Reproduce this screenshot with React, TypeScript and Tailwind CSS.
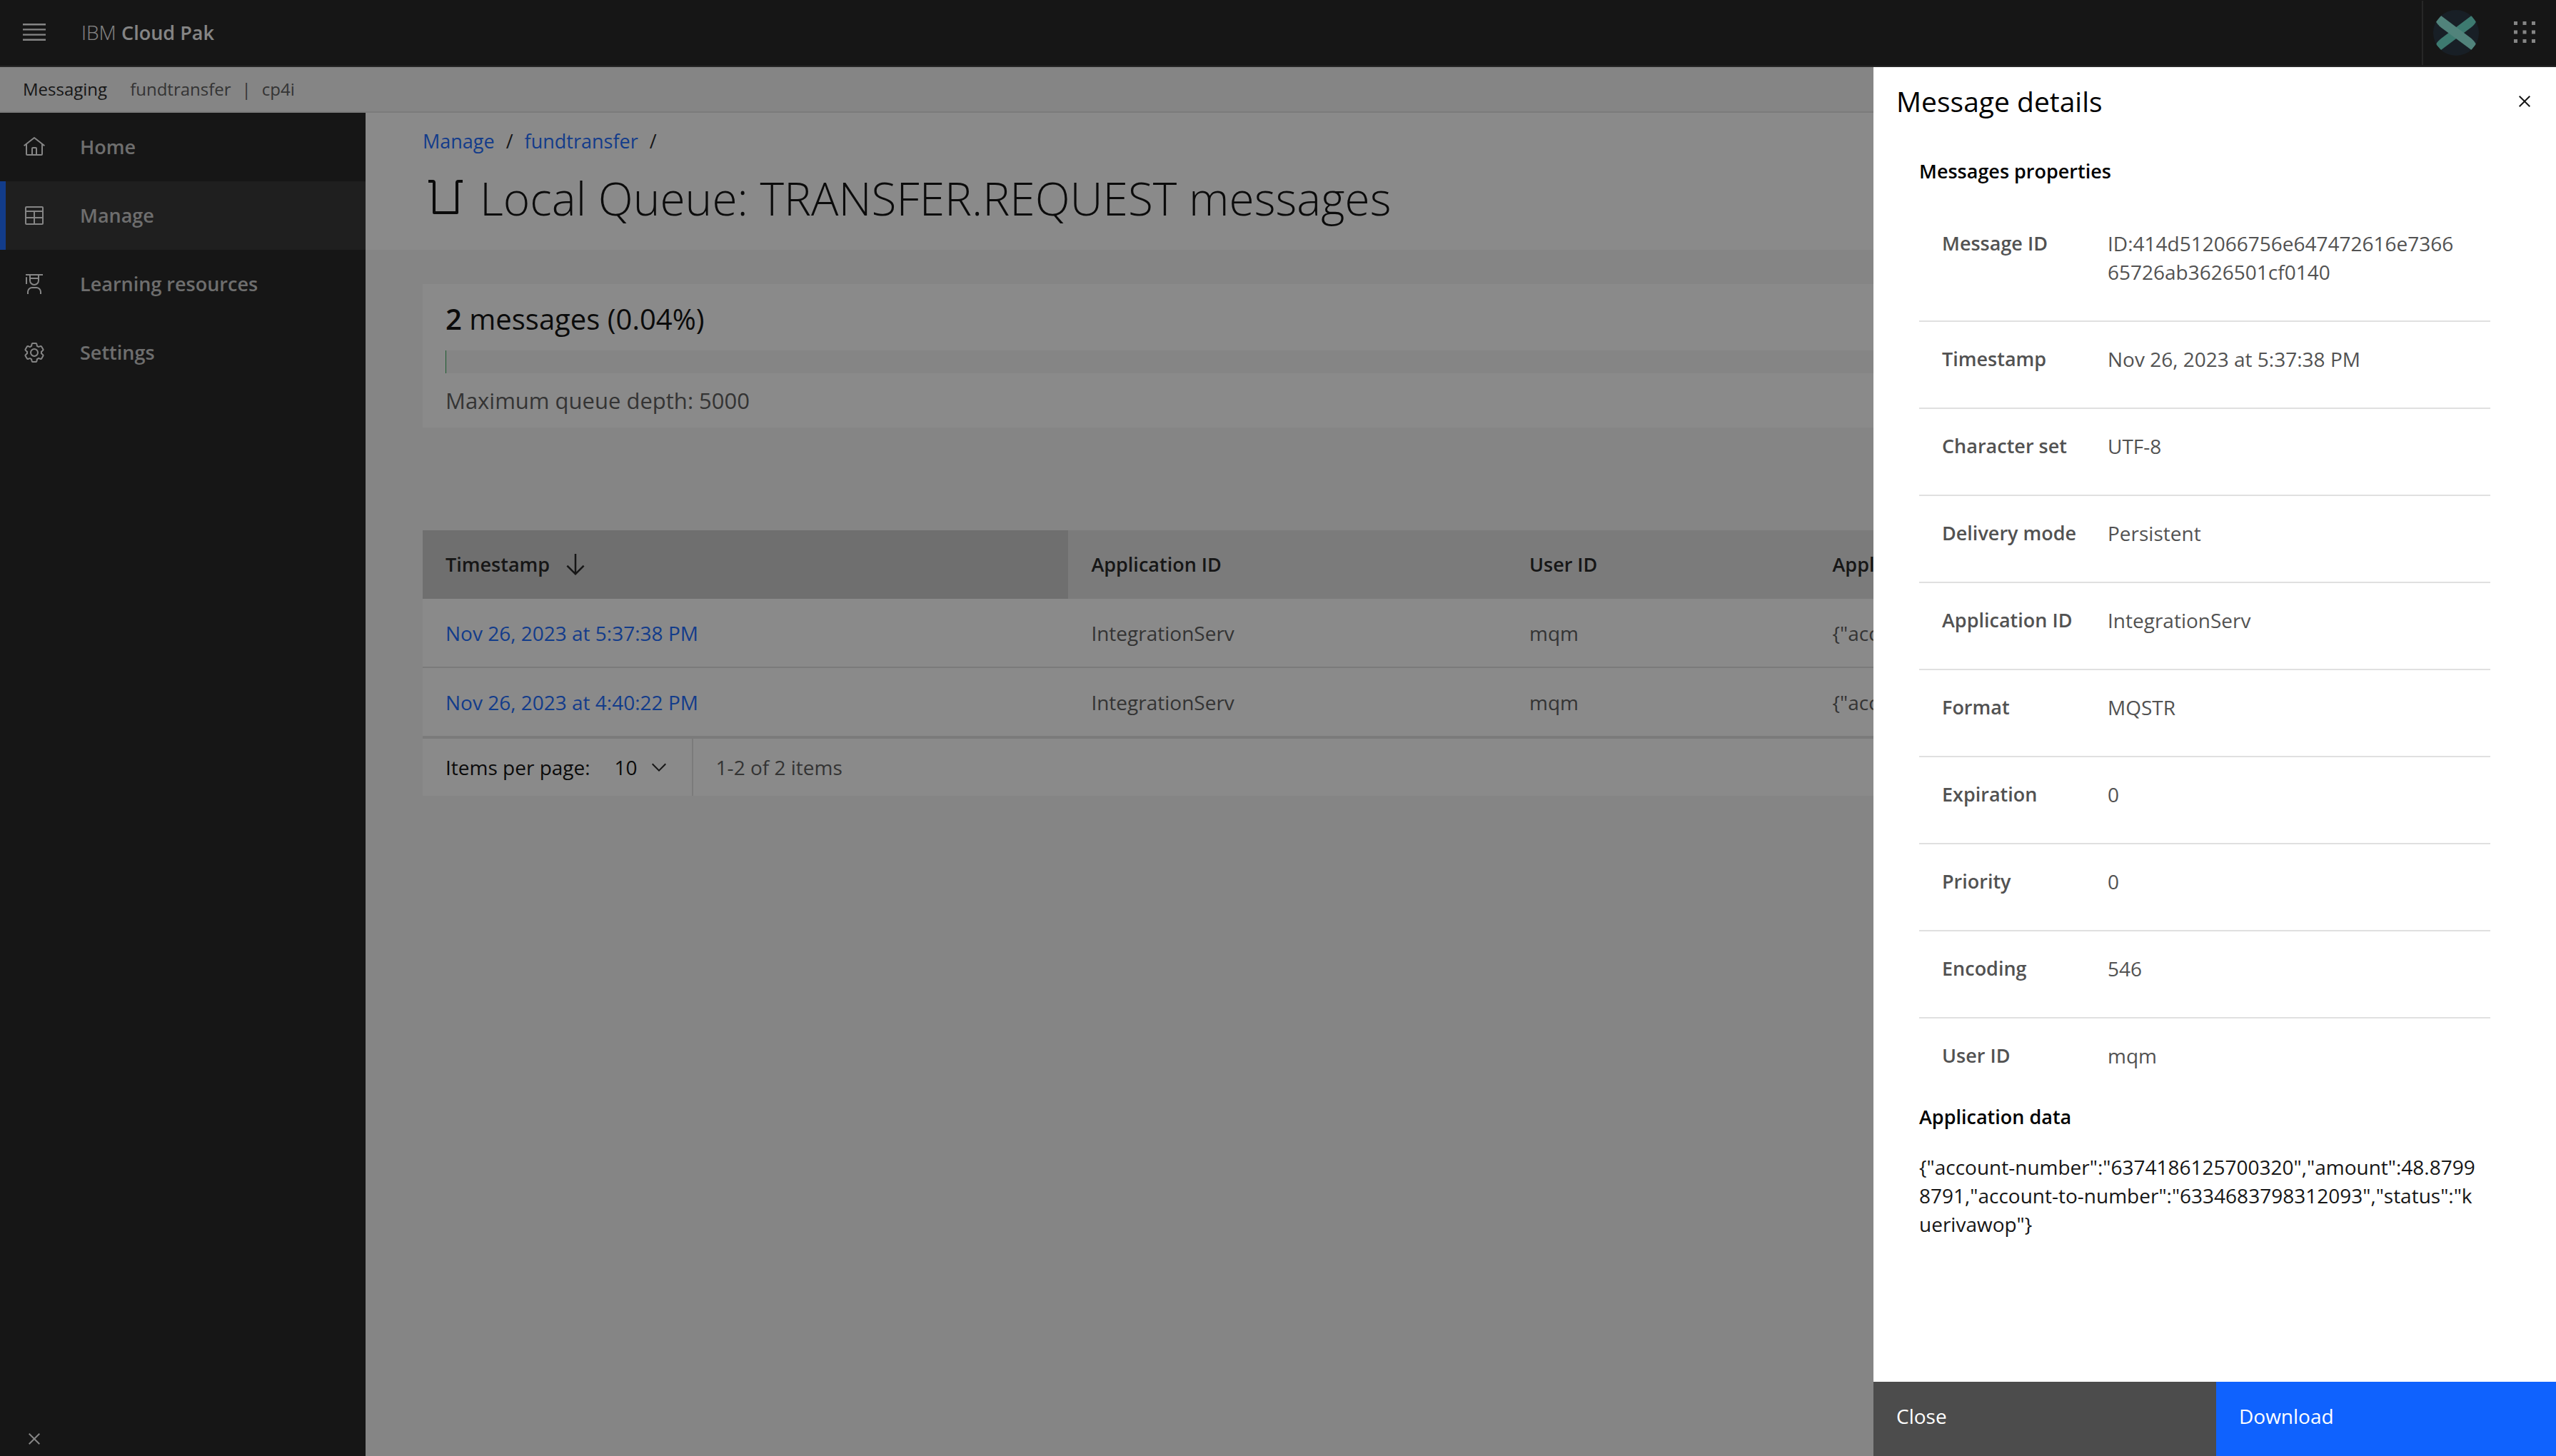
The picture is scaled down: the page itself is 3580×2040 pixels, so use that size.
import type { ReactNode } from "react";

const NAV: { label: string; icon: ReactNode; current?: boolean }[] = [
  {
    label: "Home",
    icon: (
      <path d="M16.61 2.21a1 1 0 0 0-1.24 0L1 13.42 2.24 15 4 13.62V26a2 2 0 0 0 2 2h20a2 2 0 0 0 2-2V13.63L29.76 15 31 13.43zM18 26h-4v-8h4zm2 0v-8a2 2 0 0 0-2-2h-4a2 2 0 0 0-2 2v8H6V12.06l10-7.79 10 7.8V26z" />
    ),
  },
  {
    label: "Manage",
    current: true,
    icon: (
      <path d="M27 3H5a2 2 0 0 0-2 2v22a2 2 0 0 0 2 2h22a2 2 0 0 0 2-2V5a2 2 0 0 0-2-2zm0 2v4H5V5zM17 11h10v7H17zm-2 7H5v-7h10zM5 20h10v7H5zm12 7v-7h10v7z" />
    ),
  },
  {
    label: "Learning resources",
    icon: (
      <path d="M26 30h-2v-3a5.006 5.006 0 0 0-5-5h-6a5.006 5.006 0 0 0-5 5v3H6v-3a7.008 7.008 0 0 1 7-7h6a7.008 7.008 0 0 1 7 7zM5 6a1 1 0 0 0-1 1v9h2V7a1 1 0 0 0-1-1zM4 2v2h5v7a7 7 0 0 0 14 0V4h5V2zm7 2h10v3H11zm5 12a5 5 0 0 1-5-5V9h10v2a5 5 0 0 1-5 5z" />
    ),
  },
  {
    label: "Settings",
    icon: (
      <path d="M27 16.76v-1.53l1.92-1.68A2 2 0 0 0 29.3 11l-2.36-4a2 2 0 0 0-1.73-1 2 2 0 0 0-.64.1l-2.43.82a11.35 11.35 0 0 0-1.31-.75l-.51-2.52a2 2 0 0 0-2-1.61h-4.68a2 2 0 0 0-2 1.61l-.51 2.52a11.48 11.48 0 0 0-1.32.75l-2.38-.86A2 2 0 0 0 6.79 6a2 2 0 0 0-1.73 1L2.7 11a2 2 0 0 0 .41 2.51L5 15.24v1.53l-1.89 1.68A2 2 0 0 0 2.7 21l2.36 4a2 2 0 0 0 1.73 1 2 2 0 0 0 .64-.1l2.43-.82a11.35 11.35 0 0 0 1.31.75l.51 2.52a2 2 0 0 0 2 1.61h4.72a2 2 0 0 0 2-1.61l.51-2.52a11.48 11.48 0 0 0 1.32-.75l2.42.82a2 2 0 0 0 .64.1 2 2 0 0 0 1.73-1l2.28-4a2 2 0 0 0-.41-2.51zM25.21 24l-3.43-1.16a8.86 8.86 0 0 1-2.71 1.57L18.36 28h-4.72l-.71-3.55a9.36 9.36 0 0 1-2.7-1.57L6.79 24l-2.36-4 2.72-2.4a8.9 8.9 0 0 1 0-3.13L4.43 12l2.36-4 3.43 1.16a8.86 8.86 0 0 1 2.71-1.57L13.64 4h4.72l.71 3.55a9.36 9.36 0 0 1 2.7 1.57L25.21 8l2.36 4-2.72 2.4a8.9 8.9 0 0 1 0 3.13L27.57 20zM16 22a6 6 0 1 1 6-6 5.94 5.94 0 0 1-6 6zm0-10a3.91 3.91 0 0 0-4 4 3.91 3.91 0 0 0 4 4 3.91 3.91 0 0 0 4-4 3.91 3.91 0 0 0-4-4z" />
    ),
  },
];

const MESSAGES = [
  { time: "Nov 26, 2023 at 5:37:38 PM", app: "IntegrationServ", user: "mqm" },
  { time: "Nov 26, 2023 at 4:40:22 PM", app: "IntegrationServ", user: "mqm" },
];

const PROPERTIES: [string, string[]][] = [
  ["Message ID", ["ID:414d512066756e647472616e7366", "65726ab3626501cf0140"]],
  ["Timestamp", ["Nov 26, 2023 at 5:37:38 PM"]],
  ["Character set", ["UTF-8"]],
  ["Delivery mode", ["Persistent"]],
  ["Application ID", ["IntegrationServ"]],
  ["Format", ["MQSTR"]],
  ["Expiration", ["0"]],
  ["Priority", ["0"]],
  ["Encoding", ["546"]],
  ["User ID", ["mqm"]],
];

const DATA_LINES = [
  '{"account-number":"6374186125700320","amount":48.8799',
  '8791,"account-to-number":"6334683798312093","status":"k',
  'uerivawop"}',
];

function CloseIcon() {
  return (
    <svg viewBox="0 0 32 32" className="size-8" fill="currentColor" aria-hidden="true">
      <path d="M24 9.4 22.6 8 16 14.6 9.4 8 8 9.4l6.6 6.6L8 22.6 9.4 24l6.6-6.6 6.6 6.6 1.4-1.4-6.6-6.6z" />
    </svg>
  );
}

function Header() {
  return (
    <header className="flex h-[94px] shrink-0 items-center border-b-2 border-[#393939] bg-[#161616] pb-0.5 text-[#f4f4f4]">
      <button aria-label="Open menu" className="grid w-24 place-items-center">
        <svg viewBox="0 0 20 20" className="size-10" fill="currentColor" aria-hidden="true">
          <path d="M2 14.8h16V16H2zM2 11.2h16v1.2H2zM2 7.6h16v1.2H2zM2 4h16v1.2H2z" />
        </svg>
      </button>
      <a href="#home" className="pl-[18px] text-[28px] leading-9 font-light">
        IBM <span className="text-[27px] font-semibold">Cloud Pak</span>
      </a>
      <div className="-mb-0.5 ml-auto flex h-full w-24 items-center justify-center border-l-2 border-[#393939] pr-0.5">
        <button aria-label="User profile">
          <svg viewBox="0 0 64 64" className="size-16" aria-hidden="true">
            <clipPath id="avatar">
              <circle cx="32" cy="32" r="32" />
            </clipPath>
            <circle cx="32" cy="32" r="32" fill="#1a2836" />
            <g clipPath="url(#avatar)">
              <path d="M4 48.500C5 45 8 42.500 11 40L53.500 8L60 16.500C58 20 56 22 53 24.500L11 56Z" fill="#64deca" />
              <path d="M11 8L53 39.500C57 43 58.500 45 60 48L53.500 56L11 24.500C7 21 5.500 19 4 16.500Z" fill="#8cf0e0" />
            </g>
          </svg>
        </button>
      </div>
      <button aria-label="Switch application" className="grid w-[92px] place-items-center pl-1">
        <svg viewBox="0 0 32 32" className="size-10" fill="currentColor" aria-hidden="true">
          <path d="M4 4h4v4H4zM14 4h4v4h-4zM24 4h4v4h-4zM4 14h4v4H4zM14 14h4v4h-4zM24 14h4v4h-4zM4 24h4v4H4zM14 24h4v4h-4zM24 24h4v4h-4z" />
        </svg>
      </button>
    </header>
  );
}

function Sidebar() {
  return (
    <nav aria-label="Main" className="flex w-[512px] shrink-0 flex-col bg-[#161616] text-[#c6c6c6]">
      <ul>
        {NAV.map(({ label, icon, current }) => (
          <li key={label}>
            <a
              href="#nav"
              aria-current={current ? "page" : undefined}
              className={
                current
                  ? "flex h-24 items-center gap-12 border-l-8 border-[#0f62fe] bg-[#282828] pl-6 text-[27px] font-semibold"
                  : "flex h-24 items-center gap-12 pl-8 text-[27px] font-semibold"
              }
            >
              <svg viewBox="0 0 32 32" className="size-8 text-[#f4f4f4]" fill="currentColor" aria-hidden="true">
                {icon}
              </svg>
              {label}
            </a>
          </li>
        ))}
      </ul>
      <button aria-label="Collapse navigation" className="mt-auto mb-2 ml-8 self-start text-[#f4f4f4]">
        <CloseIcon />
      </button>
    </nav>
  );
}

function MessagesTable() {
  return (
    <div className="mt-36">
      <table className="w-full table-fixed text-left">
        <colgroup>
          <col className="w-[31.1%]" />
          <col className="w-[21.1%]" />
          <col className="w-[14.6%]" />
          <col />
        </colgroup>
        <thead>
          <tr className="h-24 bg-[#e0e0e0] text-[27px] text-[#161616]">
            <th scope="col" aria-sort="descending" className="bg-[#c9c9c9] px-8 font-semibold">
              <button className="flex items-center gap-4">
                Timestamp
                <svg viewBox="0 0 32 32" className="size-10" fill="currentColor" aria-hidden="true">
                  <path d="M24.59 16.59 17 24.17V4h-2v20.17l-7.590-7.580L6 18l10 10 10-10z" />
                </svg>
              </button>
            </th>
            <th scope="col" className="px-8 font-semibold">Application ID</th>
            <th scope="col" className="px-8 font-semibold">User ID</th>
            <th scope="col" className="px-8 font-semibold">Application data</th>
          </tr>
        </thead>
        <tbody className="bg-white text-[28px] text-[#525252]">
          {MESSAGES.map((m, i) => (
            <tr key={m.time} className={i > 0 ? "h-24 border-t-2 border-[#e0e0e0]" : "h-24"}>
              <td className="px-8">
                <a href="#message" className="text-[#0f62fe]">{m.time}</a>
              </td>
              <td className="px-8">{m.app}</td>
              <td className="px-8">{m.user}</td>
              <td className="px-8">{'{"account…'}</td>
            </tr>
          ))}
        </tbody>
      </table>
      <div className="flex h-[84px] items-stretch border-t-4 border-[#e0e0e0] bg-white text-[28px]">
        <div className="flex items-center border-r-2 border-[#e0e0e0] pl-8">
          <label htmlFor="page-size" className="text-black">Items per page:</label>
          <div className="relative ml-[34px] flex h-full items-center">
            <select id="page-size" className="h-full w-[108px] appearance-none bg-transparent text-black">
              <option>10</option>
            </select>
            <svg viewBox="0 0 32 32" className="pointer-events-none absolute right-[30px] size-8" fill="#161616" aria-hidden="true">
              <path d="M16 22 6 12l1.400-1.400 8.600 8.600 8.600-8.600L26 12z" />
            </svg>
          </div>
        </div>
        <span className="flex items-center pl-8 text-[#525252]">1-2 of 2 items</span>
      </div>
    </div>
  );
}

function Main() {
  return (
    <main className="min-w-0 flex-1 bg-[#f4f4f4]">
      <div className="h-48 bg-white px-20 pt-[22px]">
        <nav aria-label="Breadcrumb">
          <ol className="flex gap-4 text-[27px] leading-9">
            <li className="flex gap-4">
              <a href="#manage" className="text-[#0f62fe]">Manage</a>
              <span className="text-[#161616]">/</span>
            </li>
            <li className="flex gap-4">
              <a href="#fundtransfer" className="text-[#0f62fe]">fundtransfer</a>
              <span className="text-[#161616]">/</span>
            </li>
          </ol>
        </nav>
        <h1 className="mt-[22px] flex items-center gap-4 text-[64px] leading-[80px] font-light text-black">
          <svg viewBox="0 0 64 64" className="size-16" fill="none" stroke="currentColor" strokeWidth="4" strokeLinejoin="round" aria-hidden="true">
            <path d="M8 8h6q2 0 2 2v42h32V10q0-2 2-2h6" />
          </svg>
          Local Queue: TRANSFER.REQUEST messages
        </h1>
      </div>
      <div className="px-20 pt-12">
        <section className="bg-white px-8 pt-6 pb-[18px]">
          <p className="text-[40px] leading-[50px] text-black">
            <span className="font-semibold">2</span> messages (0.04%)
          </p>
          <div role="meter" aria-label="Queue depth" aria-valuemin={0} aria-valuemax={5000} aria-valuenow={2} className="mt-[19px] h-8 bg-[#f4f4f4]">
            <div className="h-full w-px bg-[#24a148]" />
          </div>
          <p className="mt-[18px] text-[31px] leading-10 text-[#525252]">Maximum queue depth: 5000</p>
        </section>
        <MessagesTable />
      </div>
    </main>
  );
}

function DetailsPanel() {
  return (
    <aside role="dialog" aria-label="Message details" className="fixed top-[94px] right-0 bottom-0 flex w-[956px] flex-col bg-white">
      <div className="flex items-center justify-between pt-[22px] pr-7 pl-8">
        <h2 className="text-[39px] leading-[52px] text-black">Message details</h2>
        <button aria-label="Close panel" className="text-[#161616]">
          <CloseIcon />
        </button>
      </div>
      <div className="flex-1 overflow-hidden pt-[54px] pr-[92px] pl-16">
        <h3 className="text-[27px] leading-9 font-semibold text-black">Messages properties</h3>
        <table className="mt-[31px] w-full text-left text-[28px] leading-10 text-[#525252]">
          <tbody>
            {PROPERTIES.map(([name, value]) => (
              <tr key={name} className="border-b-2 border-[#e0e0e0] align-top last:border-b-0">
                <th scope="row" className="w-[264px] pt-8 pb-12 pl-8 text-[27px] font-semibold whitespace-nowrap">
                  {name}
                </th>
                <td className="pt-8 pb-12">
                  {value.map((line) => (
                    <span key={line} className="block">{line}</span>
                  ))}
                </td>
              </tr>
            ))}
          </tbody>
        </table>
        <h3 className="text-[27px] leading-9 font-semibold text-black">Application data</h3>
        <p className="mt-8 text-[28px] leading-10 whitespace-nowrap text-[#161616]">
          {DATA_LINES.map((line) => (
            <span key={line} className="block">{line}</span>
          ))}
        </p>
      </div>
      <div className="flex h-[104px] shrink-0 text-left text-[28px] leading-9 text-white">
        <button className="flex w-[480px] items-start bg-[#4c4c4c] px-8 pt-[30px]">Close</button>
        <button className="flex flex-1 items-start bg-[#0f62fe] px-8 pt-[30px]">Download</button>
      </div>
    </aside>
  );
}

export default function App() {
  return (
    <div className="flex min-h-screen flex-col font-['Open_Sans',sans-serif]">
      <Header />
      <div className="flex h-16 shrink-0 items-center border-b-2 border-[#e0e0e0] bg-[#f4f4f4] pl-8 text-[24px] text-[#525252]">
        <span className="text-[#161616]">Messaging</span>
        <span className="ml-8">fundtransfer</span>
        <span className="mx-[15px]">|</span>
        <span>cp4i</span>
      </div>
      <div className="flex flex-1">
        <Sidebar />
        <Main />
      </div>
      <div className="fixed inset-0 bg-[#161616]/50" />
      <DetailsPanel />
    </div>
  );
}
